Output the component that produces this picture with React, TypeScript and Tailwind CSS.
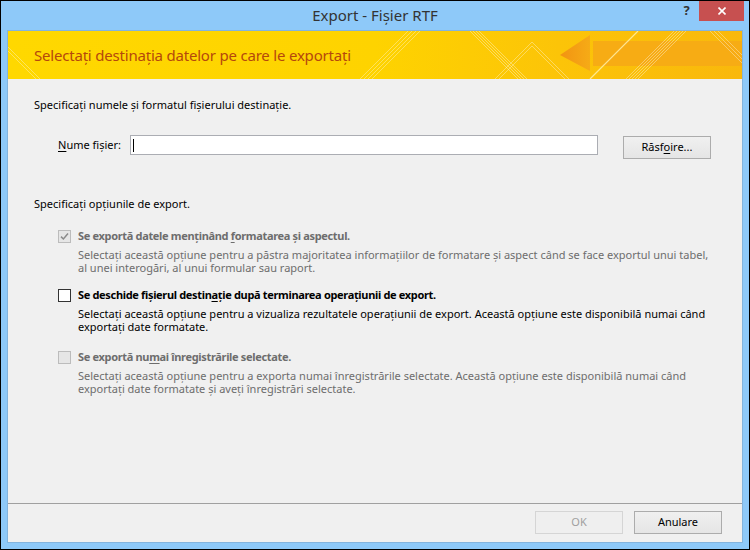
import React from 'react';

const Banner: React.FC = () => {
  // decorative stripes, in banner coordinates (734 x 48)
  const fwd = (x: number, n: number, step: number) =>
    Array.from({ length: n }, (_, i) => (
      <line key={`f${x}-${i}`} x1={x + i * step} y1={48} x2={x + i * step + 48} y2={0} />
    ));
  const back = (x: number, n: number, step: number) =>
    Array.from({ length: n }, (_, i) => (
      <line key={`b${x}-${i}`} x1={x + i * step} y1={0} x2={x + i * step + 48} y2={48} />
    ));

  return (
    <div className="relative h-[48px] border-b border-[#f1e4a6]">
      <svg className="absolute left-0 top-0" width="734" height="48" viewBox="0 0 734 48">
        <defs>
          <linearGradient id="bnr" x1="0" x2="1" y1="0" y2="0">
            <stop offset="0" stopColor="#ffd800" />
            <stop offset="0.5" stopColor="#fed300" />
            <stop offset="0.75" stopColor="#fcc408" />
            <stop offset="1" stopColor="#f9b80c" />
          </linearGradient>
          <linearGradient id="arw" x1="0" x2="1" y1="0" y2="0">
            <stop offset="0" stopColor="#f29312" />
            <stop offset="1" stopColor="#f6ab16" />
          </linearGradient>
        </defs>
        <rect width="734" height="48" fill="url(#bnr)" />
        <polygon points="552,24 582,4 582,40" fill="url(#arw)" />
        <rect x="585" y="10" width="149" height="25" fill="#f7ac14" />
        <g stroke="#fff" strokeOpacity="0.35" strokeWidth="1">
          {back(-20, 2, 4)}
          {fwd(352, 4, 4)}
          {back(462, 4, 3)}
          <line x1={524} y1={11} x2={487} y2={48} />
          <line x1={524} y1={15} x2={491} y2={48} />
          <line x1={524} y1={11} x2={561} y2={48} />
          <line x1={524} y1={15} x2={557} y2={48} />
          {fwd(618, 5, 3)}
          {back(702, 3, 4)}
        </g>
        <line x1={582} y1={48} x2={630} y2={0} stroke="#fff3b0" strokeOpacity="0.8" strokeWidth="1.2" />
      </svg>
      <div className="relative pl-[26px] leading-[48px] text-[15px] tracking-[-0.2px] text-[#b5480c]">
        Selectați destinația datelor pe care le exportați
      </div>
    </div>
  );
};

const CheckBox: React.FC<{ checked?: boolean; disabled?: boolean }> = ({ checked, disabled }) => (
  <div
    className={`mt-[2px] w-[13px] h-[13px] border shrink-0 flex items-center justify-center ${
      disabled ? 'border-[#bcbcbc] bg-[#e6e6e6]' : 'border-[#333333] bg-white'
    }`}
  >
    {checked && (
      <svg width="9" height="9" viewBox="0 0 9 9">
        <path d="M1 4.6 L3.4 7 L8 1.6" fill="none" stroke={disabled ? '#8a8a8a' : '#222'} strokeWidth="1.5" />
      </svg>
    )}
  </div>
);

const Option: React.FC<{
  label: React.ReactNode;
  desc: [string, string];
  checked?: boolean;
  disabled?: boolean;
  className?: string;
}> = ({ label, desc, checked, disabled, className }) => (
  <div className={`flex ml-[24px] gap-[7px] ${className || ''}`}>
    <CheckBox checked={checked} disabled={disabled} />
    <div className={disabled ? 'text-[#6d6d6d]' : 'text-black'}>
      <div className="font-bold leading-[16px] tracking-[-0.33px]">{label}</div>
      <p className="mt-[4px] leading-[13px]">
        {desc[0]}
        <br />
        {desc[1]}
      </p>
    </div>
  </div>
);

const Btn: React.FC<{ children: React.ReactNode; disabled?: boolean; className?: string }> = ({
  children,
  disabled,
  className,
}) => (
  <div
    className={`w-[88px] h-[23px] border flex items-center justify-center ${
      disabled
        ? 'border-[#d5d5d5] bg-[#efefef] text-[#a0a0a0]'
        : 'border-[#acacac] bg-gradient-to-b from-[#f0f0f0] to-[#e5e5e5] text-black'
    } ${className || ''}`}
  >
    {children}
  </div>
);

export default function App() {
  return (
    <div className="w-[750px] h-[550px] border border-black bg-[#8ec9f9] flex flex-col font-['Noto_Sans',sans-serif] text-[11px]">
      {/* title bar */}
      <div className="h-[29px] flex items-start shrink-0">
        <div className="w-[71px]" />
        <div className="flex-1 text-center text-[15px] leading-[29px] text-[#333333]">
          Export - Fișier RTF
        </div>
        <div className="flex items-start mr-[5px]">
          <div className="w-[17px] h-[20px] flex items-center justify-center text-[13px] font-bold text-[#333333]">?</div>
          <div className="ml-[4px] w-[45px] h-[20px] bg-[#c75050] flex items-center justify-center">
            <svg width="8" height="8" viewBox="0 0 8 8">
              <path d="M0.5 0.5 L7.5 7.5 M7.5 0.5 L0.5 7.5" stroke="#fff" strokeWidth="1.6" />
            </svg>
          </div>
        </div>
      </div>

      {/* client */}
      <div className="mx-[6px] mb-[6px] flex-1 border border-[#83b4de] bg-[#f0f0f0] flex flex-col">
        <Banner />

        <div className="px-[26px] flex-1">
          <div className="mt-[18px] leading-[16px]">Specificați numele și formatul fișierului destinație.</div>

          <div className="mt-[22px] flex items-start h-[24px]">
            <div className="ml-[24px] w-[72px] leading-[20px]">
              <u className="underline-offset-2">N</u>ume fișier:
            </div>
            <div className="w-[468px] h-[20px] border border-[#abadb3] bg-white flex items-center pl-[2px]">
              <div className="w-[1px] h-[13px] bg-black" />
            </div>
            <Btn className="ml-[25px] mt-[1px]">
              <span>
                Răsf<u className="underline-offset-2">o</u>ire...
              </span>
            </Btn>
          </div>

          <div className="mt-[37px] leading-[16px]">Specificați opțiunile de export.</div>

          <Option
            className="mt-[16px]"
            checked
            disabled
            label={
              <>
                Se exportă datele menținând <u className="underline-offset-2">f</u>ormatarea și aspectul.
              </>
            }
            desc={[
              'Selectați această opțiune pentru a păstra majoritatea informațiilor de formatare și aspect când se face exportul unui tabel,',
              'al unei interogări, al unui formular sau raport.',
            ]}
          />
          <Option
            className="mt-[13px]"
            label={
              <>
                Se deschide fișierul destin<u className="underline-offset-2">a</u>ție după terminarea operațiunii de export.
              </>
            }
            desc={[
              'Selectați această opțiune pentru a vizualiza rezultatele operațiunii de export. Această opțiune este disponibilă numai când',
              'exportați date formatate.',
            ]}
          />
          <Option
            className="mt-[16px]"
            disabled
            label={
              <>
                Se exportă nu<u className="underline-offset-2">m</u>ai înregistrările selectate.
              </>
            }
            desc={[
              'Selectați această opțiune pentru a exporta numai înregistrările selectate. Această opțiune este disponibilă numai când',
              'exportați date formatate și aveți înregistrări selectate.',
            ]}
          />
        </div>

        {/* footer */}
        <div className="border-t border-[#a0a0a0] pt-[7px] pb-[8px] pr-[20px] flex justify-end gap-[11px]">
          <Btn disabled>OK</Btn>
          <Btn>Anulare</Btn>
        </div>
      </div>
    </div>
  );
}
